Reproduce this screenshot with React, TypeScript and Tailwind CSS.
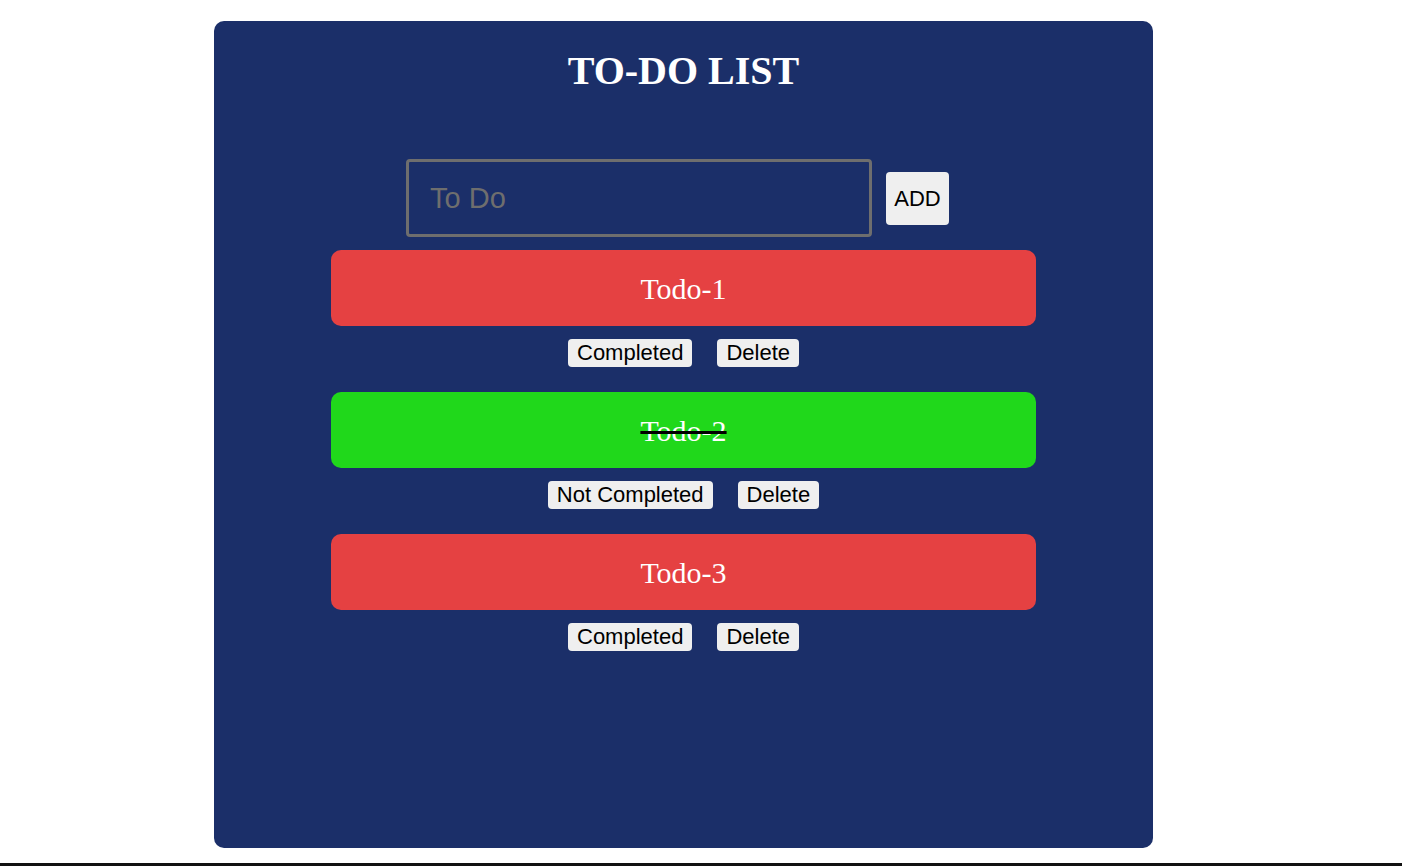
import React, { useState } from "react";

type Todo = { id: number; text: string; done: boolean };

const App = () => {
  const [todos, setTodos] = useState<Todo[]>([
    { id: 1, text: "Todo-1", done: false },
    { id: 2, text: "Todo-2", done: true },
    { id: 3, text: "Todo-3", done: false },
  ]);
  const [value, setValue] = useState("");

  const addTodo = () => {
    if (!value.trim()) return;
    setTodos((prev) => [...prev, { id: Date.now(), text: value, done: false }]);
    setValue("");
  };

  const toggle = (id: number) =>
    setTodos((prev) => prev.map((t) => (t.id === id ? { ...t, done: !t.done } : t)));

  const remove = (id: number) => setTodos((prev) => prev.filter((t) => t.id !== id));

  return (
    <div className="min-h-[866px] bg-white flex flex-col font-['Liberation_Sans',Arial,sans-serif]">
      <div className="w-[939px] h-[827px] mt-[21px] ml-[214px] bg-[#1b2f69] rounded-[10px] flex flex-col items-center">
        <h1 className="mt-[27px] text-[40px] leading-[46px] font-bold text-white font-['Liberation_Serif','Times_New_Roman',serif]">
          TO-DO LIST
        </h1>

        <div className="mt-[65px] flex items-center gap-[14px] mr-[12px]">
          <input
            className="w-[466px] h-[78px] bg-transparent border-[3px] border-[#6e6e6e] rounded-[4px] px-[21px] text-[29px] text-white placeholder:text-[#6e6e6e] outline-none"
            placeholder="To Do"
            value={value}
            onChange={(e) => setValue(e.target.value)}
          />
          <button
            onClick={addTodo}
            className="w-[63px] h-[53px] bg-[#efefef] rounded-[4px] text-[22px] text-black"
          >
            ADD
          </button>
        </div>

        <div className="mt-[13px] flex flex-col items-center">
          {todos.map((t) => (
            <div key={t.id} className="flex flex-col items-center mb-[25px]">
              <div
                className={`w-[705px] h-[76px] rounded-[10px] flex items-center justify-center text-white text-[30px] font-['Liberation_Serif','Times_New_Roman',serif] ${
                  t.done ? "bg-[#20d81b]" : "bg-[#e54142]"
                }`}
              >
                <span className={t.done ? "line-through decoration-black decoration-[3px]" : ""}>
                  {t.text}
                </span>
              </div>
              <div className="mt-[13px] flex items-center gap-[25px]">
                <button
                  onClick={() => toggle(t.id)}
                  className="h-[28px] px-[9px] bg-[#efefef] rounded-[4px] text-[22px] leading-[26px] text-black"
                >
                  {t.done ? "Not Completed" : "Completed"}
                </button>
                <button
                  onClick={() => remove(t.id)}
                  className="h-[28px] px-[9px] bg-[#efefef] rounded-[4px] text-[22px] leading-[26px] text-black"
                >
                  Delete
                </button>
              </div>
            </div>
          ))}
        </div>
      </div>
      <div className="mt-[15px] h-[3px] bg-[#111]" />
    </div>
  );
};

export default App;
